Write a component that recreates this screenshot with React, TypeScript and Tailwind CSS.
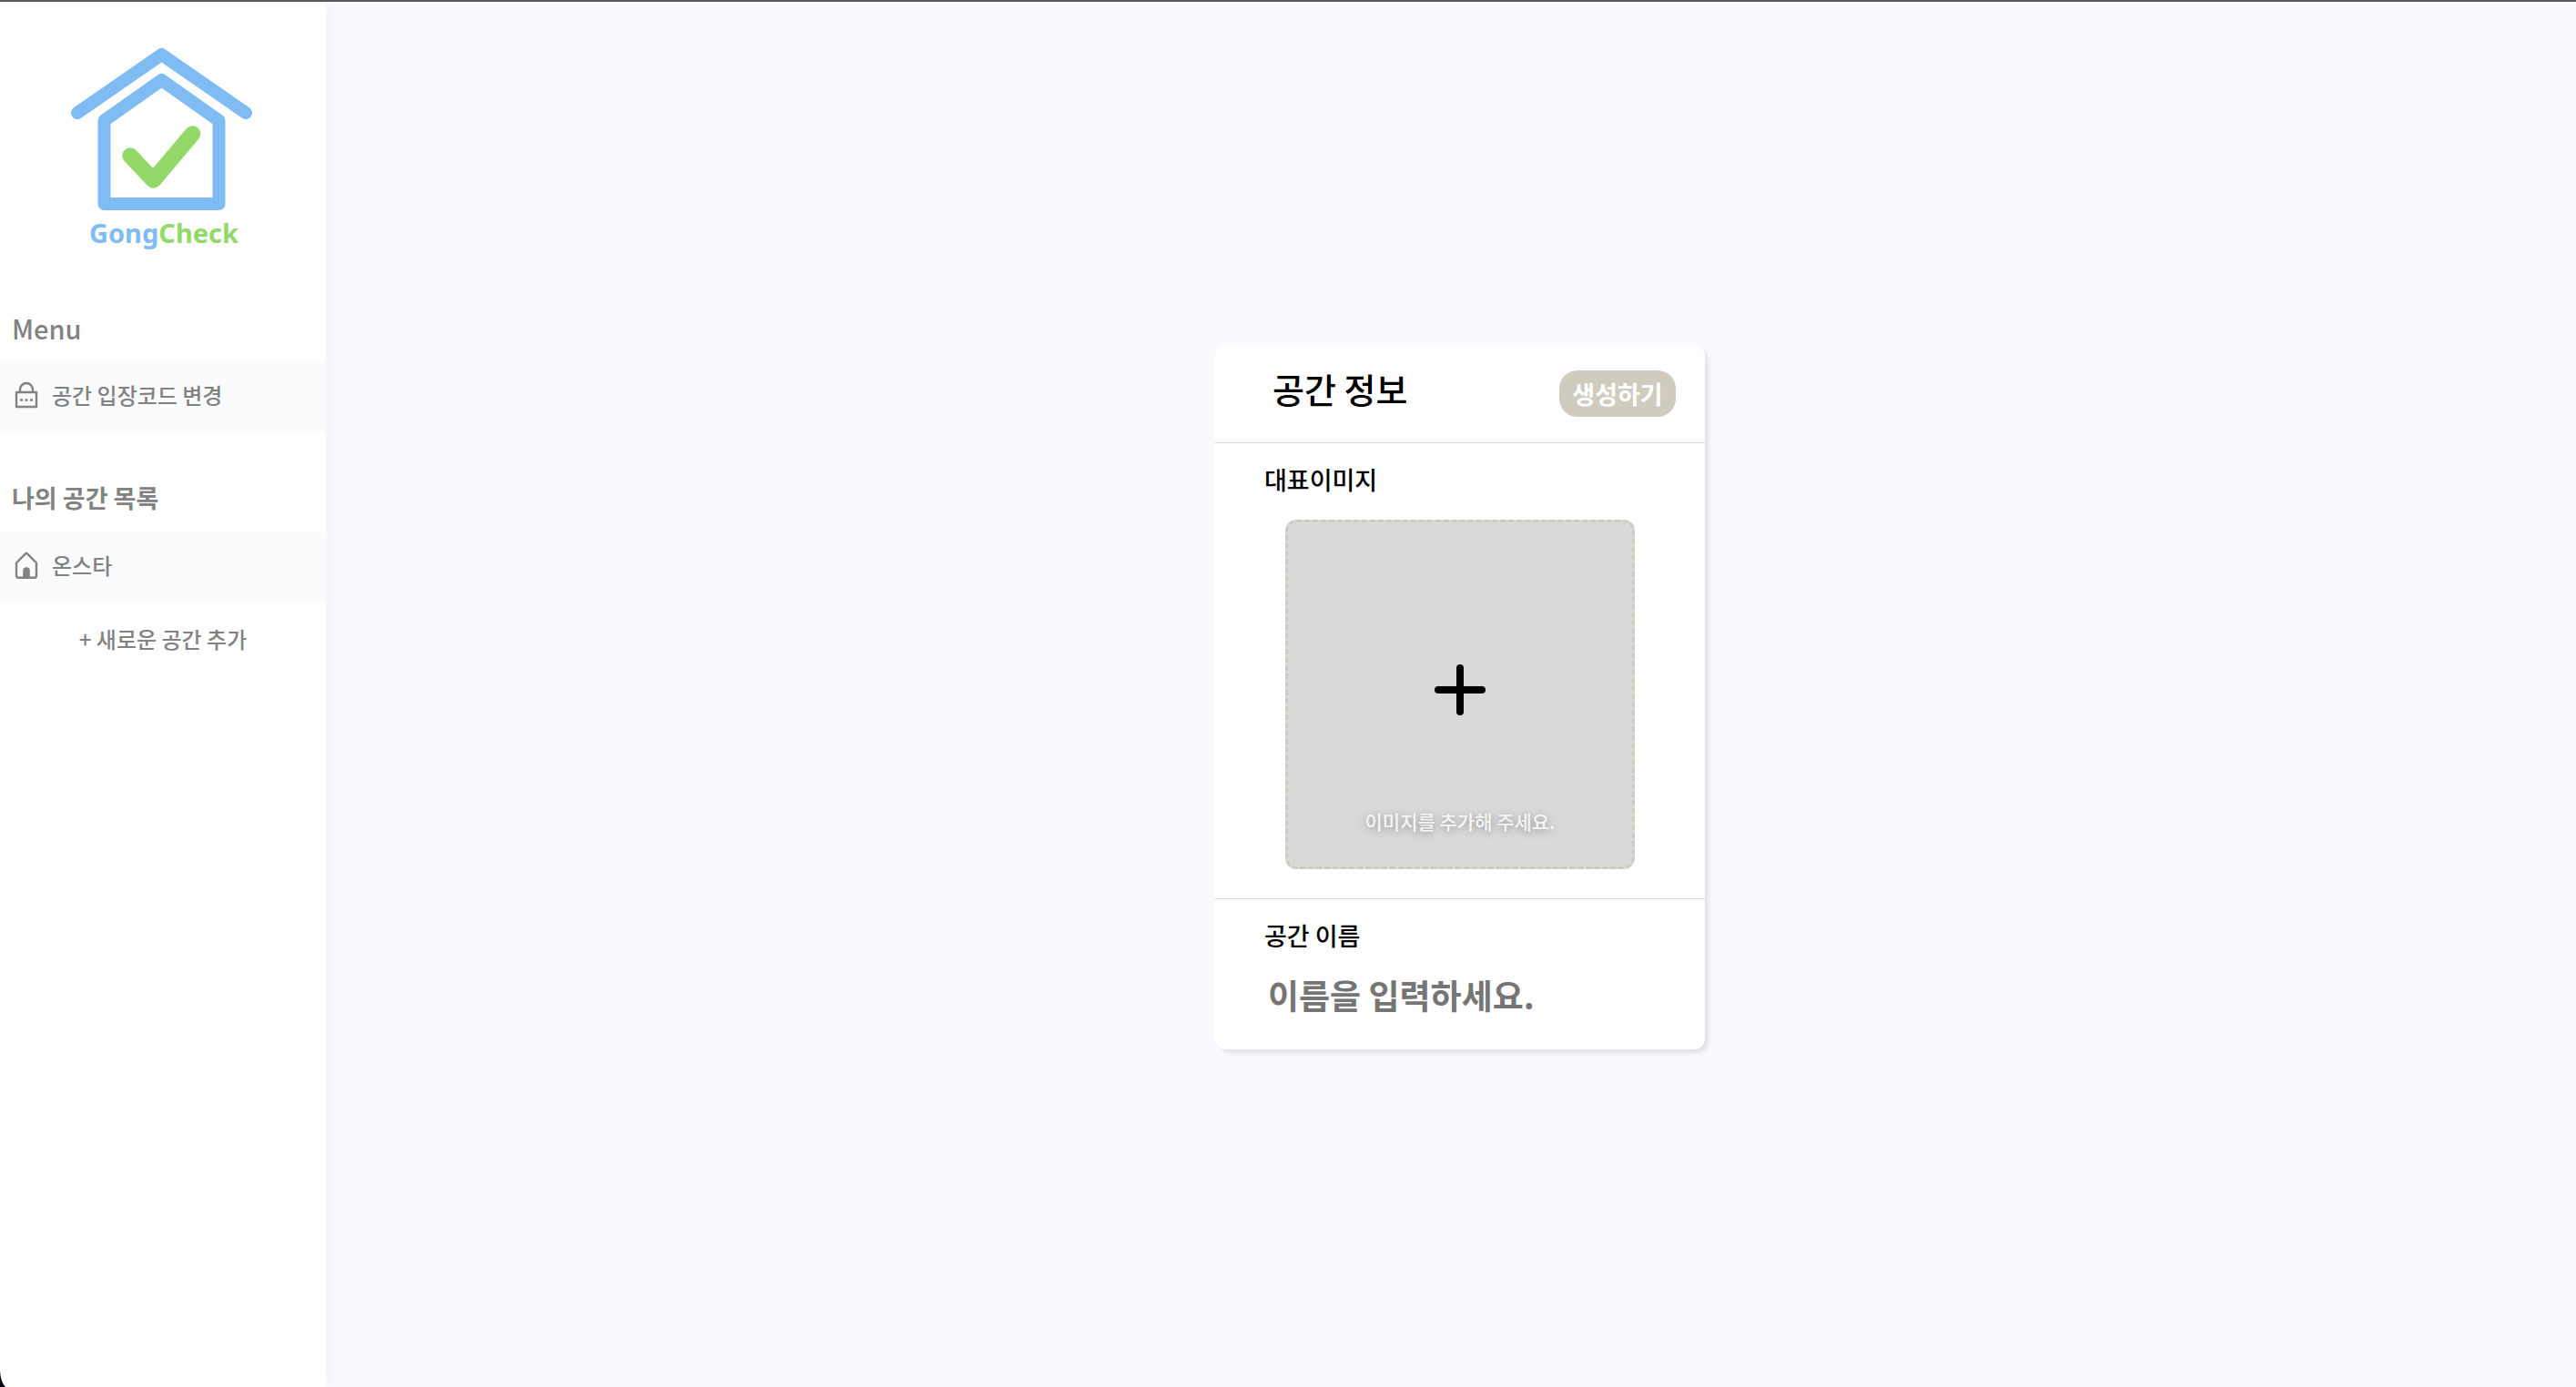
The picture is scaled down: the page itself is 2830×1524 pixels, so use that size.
import React from "react";

function Logo() {
  return (
    <svg viewBox="0 0 200 232" className="h-58 w-50" fill="none" strokeLinecap="round" strokeLinejoin="round" role="img" aria-label="GongCheck">
      <path d="M7 82 L99.500 18 L192 82" stroke="#7ebcf3" strokeWidth="14" />
      <path d="M36.500 90.500 L99.500 46 L162.500 90.500 V182 H36.500 Z" stroke="#7ebcf3" strokeWidth="14" />
      <path d="M65 129 L90.500 156 L133.500 105" stroke="#93d869" strokeWidth="17.500" />
      <text x="20" y="225" fontFamily="'Noto Sans', sans-serif" fontWeight="700" fontSize="29" fill="#7ebcf3">
        Gong<tspan fill="#93d869">Check</tspan>
      </text>
    </svg>
  );
}

function LockIcon() {
  return (
    <svg viewBox="0 0 32 32" className="size-8 shrink-0" fill="none" stroke="#828282" strokeWidth="2.400" strokeLinejoin="round" aria-hidden="true">
      <path d="M9 12.500 V10 a7 7 0 0 1 14 0 V12.500" />
      <rect x="5" y="13" width="22" height="16" />
      <path d="M9 21.500 h3 M14.500 21.500 h3 M20 21.500 h3" strokeWidth="2.600" />
    </svg>
  );
}

function HouseIcon() {
  return (
    <svg viewBox="0 0 32 32" className="size-8 shrink-0" fill="none" stroke="#828282" strokeWidth="2.400" strokeLinejoin="round" aria-hidden="true">
      <path d="M5 13.500 L14.800 3.600 a1.700 1.700 0 0 1 2.400 0 L27 13.500 V27.500 a2.200 2.200 0 0 1 -2.200 2.200 H7.200 a2.200 2.200 0 0 1 -2.200 -2.200 Z" />
      <path d="M12.200 30 V22 a3.800 3.800 0 0 1 7.600 0 V30 Z" fill="#828282" stroke="none" />
    </svg>
  );
}

function MenuRow({ icon, label }: { icon: React.ReactNode; label: string }) {
  return (
    <a href="#" className="flex h-[77px] items-center gap-3 bg-[#fafbfd] px-[13px] pb-1.5 text-2xl leading-8">
      {icon}
      <span>{label}</span>
    </a>
  );
}

export default function App() {
  return (
    <div className="relative flex min-h-screen border-t-2 border-[#5c5a5e] bg-[#f9faff] font-['Noto_Sans_CJK_KR',sans-serif] font-medium text-black">
      <aside className="z-10 w-[358px] shrink-0 bg-white text-[#828282] shadow-[2px_0_16px_rgba(30,30,60,0.04)]">
        <a href="#" className="flex justify-center pt-10 pr-0.5">
          <Logo />
        </a>
        <nav>
          <h2 className="mt-[62px] px-[13px] text-[29px] leading-12">Menu</h2>
          <div className="mt-3.5">
            <MenuRow icon={<LockIcon />} label="공간 입장코드 변경" />
          </div>
          <h2 className="mt-12 px-[13px] text-[27px] leading-12 font-bold">나의 공간 목록</h2>
          <div className="mt-3.5">
            <MenuRow icon={<HouseIcon />} label="온스타" />
          </div>
        </nav>
        <button type="button" className="mt-[22px] w-full text-center text-2xl leading-9">
          + 새로운 공간 추가
        </button>
      </aside>

      <main className="flex flex-1 items-center justify-center pt-1.5 pl-5">
        <form className="w-[538px] rounded-xl bg-white shadow-[4px_4px_4px_rgba(30,30,50,0.1)]">
          <header className="flex h-[108px] items-center justify-between border-b border-[#d9d9d9] pr-8 pl-[63px]">
            <h1 className="pb-3 text-[38px] leading-12">공간 정보</h1>
            <button type="button" className="h-[51px] w-32 rounded-[20px] bg-[#d0cbbf] text-center text-[27px] leading-8 font-bold text-white">
              생성하기
            </button>
          </header>
          <section className="border-b border-[#d9d9d9] px-[54px] pt-5 pb-8">
            <h2 className="text-[27px] leading-10">대표이미지</h2>
            <button
              type="button"
              className="mx-auto mt-6 grid size-96 grid-rows-[1fr_56px_1fr] justify-items-center rounded-xl border-3 border-dashed border-[#d0cbbf] bg-[#d9d9d9] pb-2.5 text-[21px] text-[#f5f5f5]"
            >
              <svg viewBox="0 0 56 56" className="row-start-2 size-14" stroke="#000" strokeWidth="8" strokeLinecap="round" aria-hidden="true">
                <path d="M28 4 V52 M4 28 H52" />
              </svg>
              <span className="row-start-3 self-end pb-6 leading-8 [text-shadow:0_2px_8px_rgba(0,0,0,0.35)]">이미지를 추가해 주세요.</span>
            </button>
          </section>
          <section className="px-[54px] pt-5 pb-8">
            <label htmlFor="space-name" className="block text-[27px] leading-10">
              공간 이름
            </label>
            <input
              id="space-name"
              type="text"
              placeholder="이름을 입력하세요."
              className="mt-4 block h-[57px] w-full px-1 text-[37px] font-bold outline-none placeholder:text-[#757575]"
            />
          </section>
        </form>
      </main>

      <svg viewBox="0 0 6 18" className="absolute bottom-0 left-0 z-20 h-[18px] w-1.5" aria-hidden="true">
        <path d="M0 0 Q0.500 12 6 18 H0 Z" fill="#05050f" />
      </svg>
    </div>
  );
}
